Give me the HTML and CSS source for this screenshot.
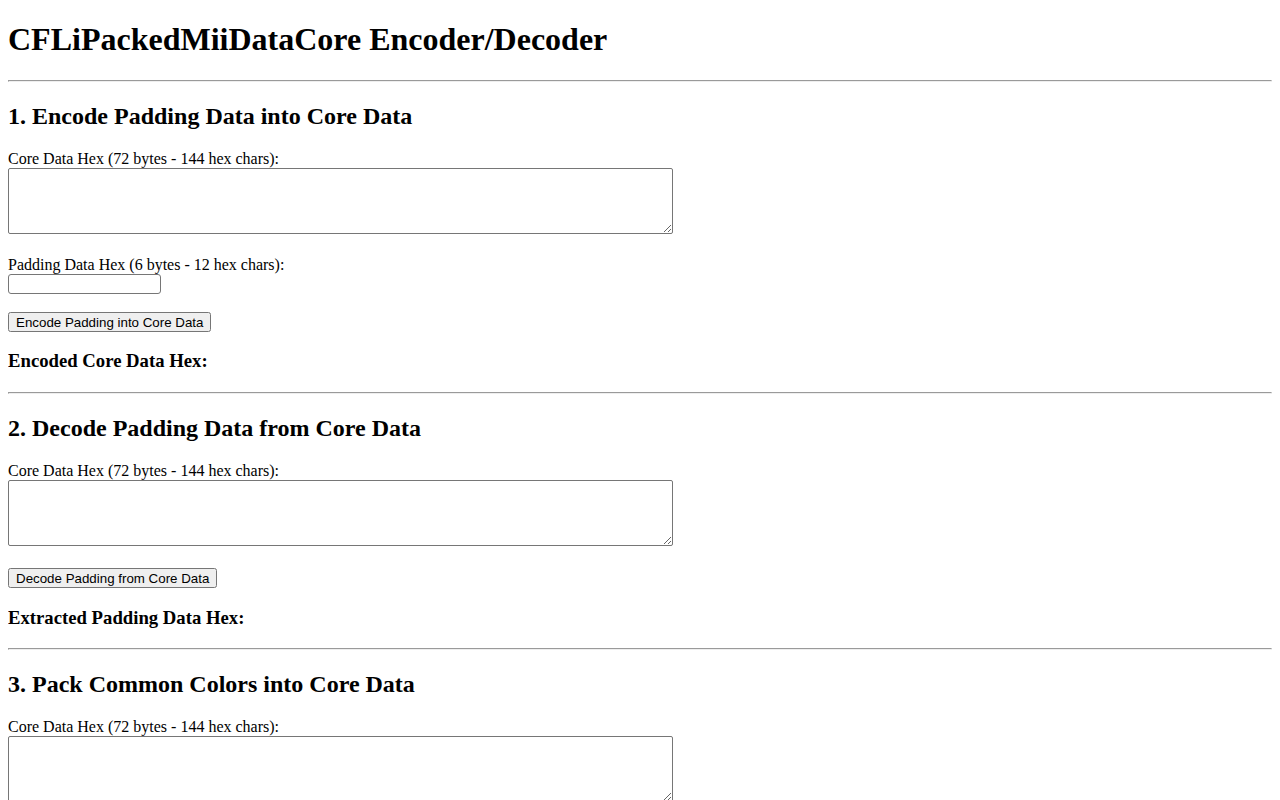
FILE: index.html
```html
<!DOCTYPE html>
<html lang="en">
<head>
<meta charset="utf-8">
<title>CFLiPackedMiiDataCore Encoder/Decoder</title>
<link rel="stylesheet" href="styles.css">
</head>
<body>
<h1 class="title">CFLiPackedMiiDataCore Encoder/Decoder</h1>
<hr class="rule">
<h2 class="section-title">1. Encode Padding Data into Core Data</h2>
<label for="coreIn1">Core Data Hex (72 bytes - 144 hex chars):</label><br>
<textarea id="coreIn1" class="hex-area"></textarea><br><br>
<label for="padIn" class="pad-label">Padding Data Hex (6 bytes - 12 hex chars):</label><br>
<input id="padIn" class="hex-input" type="text"><br><br>
<button class="action">Encode Padding into Core Data</button>
<h3 class="result-title">Encoded Core Data Hex:</h3>
<hr class="rule">
<h2 class="section-title">2. Decode Padding Data from Core Data</h2>
<label for="coreIn2">Core Data Hex (72 bytes - 144 hex chars):</label><br>
<textarea id="coreIn2" class="hex-area"></textarea><br><br>
<button class="action">Decode Padding from Core Data</button>
<h3 class="result-title">Extracted Padding Data Hex:</h3>
<hr class="rule">
<h2 class="section-title">3. Pack Common Colors into Core Data</h2>
<label for="coreIn3">Core Data Hex (72 bytes - 144 hex chars):</label><br>
<textarea id="coreIn3" class="hex-area"></textarea><br><br>
</body>
</html>
```

FILE: styles.css
```css
body {
  margin: 8px;
  font-family: "Liberation Serif", "Times New Roman", serif;
  font-size: 16px;
  color: #000;
  background: #fff;
}

.title {
  margin-top: 13.44px;
}

.section-title {
  margin-top: 20.92px;
}

.result-title {
  margin-bottom: 19.72px;
}

.hex-area {
  width: 665px;
  height: 66px;
  box-sizing: border-box;
  border: 1px solid #767676;
  border-radius: 2px;
  font-family: "Liberation Mono", monospace;
  font-size: 13.333px;
}

.hex-input {
  width: 153px;
  height: 20px;
  box-sizing: border-box;
  border: 1px solid #767676;
  border-radius: 3px;
  font-family: "Liberation Sans", Arial, sans-serif;
  font-size: 13.333px;
}

.action {
  font-family: "Liberation Sans", Arial, sans-serif;
  font-size: 13.333px;
  height: 20px;
}
```
